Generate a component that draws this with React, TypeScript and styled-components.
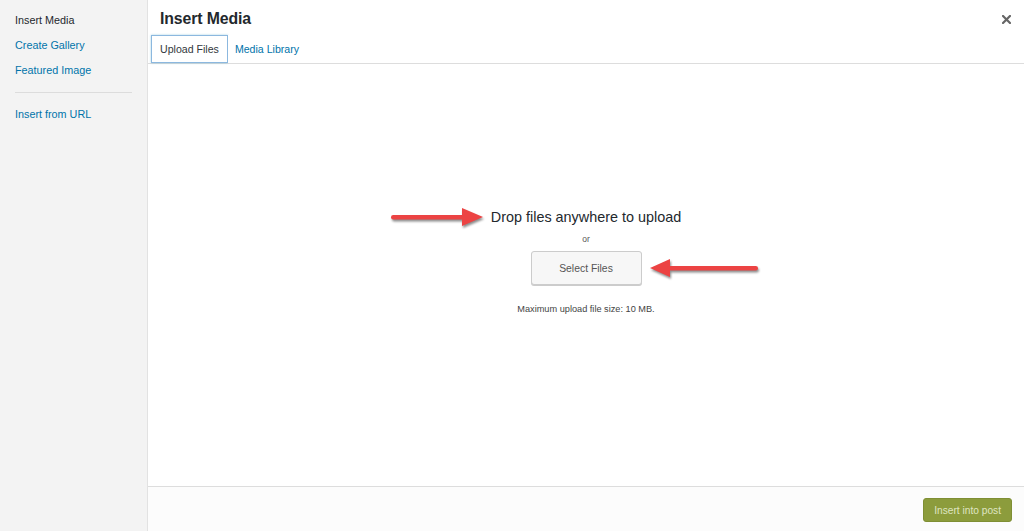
import React from 'react'
import styled, { createGlobalStyle } from 'styled-components'

const GlobalStyle = createGlobalStyle`
  html, body {
    margin: 0;
    padding: 0;
    height: 100%;
    background: #fff;
  }
  body {
    font-family: "Liberation Sans", Arial, sans-serif;
    color: #444;
  }
  #root {
    height: 100%;
  }
`

const Frame = styled.div`
  display: flex;
  height: 531px;
  width: 1024px;
  overflow: hidden;
`

const Sidebar = styled.nav`
  width: 148px;
  flex-shrink: 0;
  background: #f3f3f3;
  border-right: 1px solid #e2e2e2;
  padding-top: 13px;
  box-sizing: border-box;
`

const MenuItem = styled.a<{ $active?: boolean }>`
  display: block;
  padding: 0 15px;
  height: 25px;
  line-height: 14px;
  font-size: 10.8px;
  color: ${(p) => (p.$active ? '#23282d' : '#0073aa')};
  text-decoration: none;
`

const Separator = styled.div`
  height: 1px;
  background: #dcdcdc;
  margin: 4px 15px 14px;
`

const Main = styled.main`
  flex: 1;
  display: flex;
  flex-direction: column;
  min-width: 0;
`

const Header = styled.header`
  position: relative;
  height: 64px;
  box-sizing: border-box;
  border-bottom: 1px solid #dddddd;
  display: flex;
  flex-direction: column;
  justify-content: space-between;
`

const Title = styled.h1`
  margin: 0;
  padding: 9px 0 0 12px;
  font-size: 15.8px;
  font-weight: 700;
  line-height: 20px;
  color: #23282d;
  letter-spacing: -0.1px;
`

const Close = styled.button`
  position: absolute;
  top: 11px;
  right: 10px;
  width: 16px;
  height: 16px;
  padding: 0;
  border: 0;
  background: none;
  display: flex;
  align-items: center;
  justify-content: center;
`

const Tabs = styled.div`
  display: flex;
  padding-left: 3px;
`

const Tab = styled.a<{ $active?: boolean }>`
  display: block;
  height: 28px;
  box-sizing: border-box;
  padding: 0 ${(p) => (p.$active ? '8px' : '6px')};
  line-height: 26px;
  font-size: 10.6px;
  text-decoration: none;
  color: ${(p) => (p.$active ? '#32373c' : '#0073aa')};
  border: 1px solid ${(p) => (p.$active ? '#8cb8df' : 'transparent')};
  background: #fff;
  box-shadow: ${(p) => (p.$active ? '0 0 2px rgba(30,140,190,0.4)' : 'none')};
`

const Content = styled.section`
  flex: 1;
  display: flex;
  flex-direction: column;
  align-items: center;
  justify-content: center;
  padding-bottom: 28px;
`

const Annotated = styled.div`
  position: relative;
`

const DropText = styled.p`
  margin: 0;
  font-size: 14.4px;
  line-height: 20px;
  color: #23282d;
`

const OrText = styled.p`
  margin: 5px 0 5px;
  font-size: 8.5px;
  line-height: 14px;
  color: #555;
  text-align: center;
`

const SelectButton = styled.button`
  width: 111px;
  height: 34px;
  border: 1px solid #cccccc;
  border-radius: 3px;
  background: #f7f7f7;
  box-shadow: 0 1px 0 #cccccc;
  font-family: inherit;
  font-size: 10.4px;
  color: #555;
  cursor: pointer;
`

const MaxSize = styled.p`
  margin: 18px 0 0;
  font-size: 9.2px;
  line-height: 12px;
  color: #444;
`

const Arrow = styled.svg<{ $side: 'left' | 'right' }>`
  position: absolute;
  top: 50%;
  transform: translateY(-50%);
  ${(p) => (p.$side === 'left' ? 'right: calc(100% + 7px);' : 'left: calc(100% + 7px);')}
  filter: drop-shadow(1px 2px 1px rgba(0, 0, 0, 0.45));
  overflow: visible;
`

const Footer = styled.footer`
  height: 45px;
  box-sizing: border-box;
  border-top: 1px solid #dddddd;
  background: #fcfcfc;
  display: flex;
  align-items: center;
  justify-content: flex-end;
  padding: 0 12px 0 0;
`

const PrimaryButton = styled.button`
  height: 24px;
  padding: 0 10px;
  border: 1px solid #7f8f34;
  border-radius: 3px;
  background: #8c9c3c;
  color: #dfe5c2;
  font-family: inherit;
  font-size: 10.2px;
  margin-top: 2px;
`

const RightArrow = () => (
  <Arrow $side="left" width="94" height="22" viewBox="0 0 94 22">
    <rect x="1" y="9" width="74" height="4.5" rx="2.2" fill="#ec4343" />
    <polygon points="72,2 93,11 72,20" fill="#ec4343" />
  </Arrow>
)

const LeftArrow = () => (
  <Arrow $side="right" width="110" height="22" viewBox="0 0 110 22">
    <polygon points="1,11 21,2 21,20" fill="#ec4343" />
    <rect x="18" y="9" width="91" height="4.5" rx="2.2" fill="#ec4343" />
  </Arrow>
)

export default function App() {
  return (
    <>
      <GlobalStyle />
      <Frame>
        <Sidebar>
          <MenuItem $active>Insert Media</MenuItem>
          <MenuItem href="#">Create Gallery</MenuItem>
          <MenuItem href="#">Featured Image</MenuItem>
          <Separator />
          <MenuItem href="#">Insert from URL</MenuItem>
        </Sidebar>
        <Main>
          <Header>
            <Title>Insert Media</Title>
            <Close aria-label="Close">
              <svg width="9" height="9" viewBox="0 0 9 9">
                <path d="M1 1 L8 8 M8 1 L1 8" stroke="#666" strokeWidth="2.2" strokeLinecap="square" />
              </svg>
            </Close>
            <Tabs>
              <Tab $active href="#">Upload Files</Tab>
              <Tab href="#">Media Library</Tab>
            </Tabs>
          </Header>
          <Content>
            <Annotated>
              <DropText>Drop files anywhere to upload</DropText>
              <RightArrow />
            </Annotated>
            <OrText>or</OrText>
            <Annotated>
              <SelectButton>Select Files</SelectButton>
              <LeftArrow />
            </Annotated>
            <MaxSize>Maximum upload file size: 10 MB.</MaxSize>
          </Content>
          <Footer>
            <PrimaryButton disabled>Insert into post</PrimaryButton>
          </Footer>
        </Main>
      </Frame>
    </>
  )
}
